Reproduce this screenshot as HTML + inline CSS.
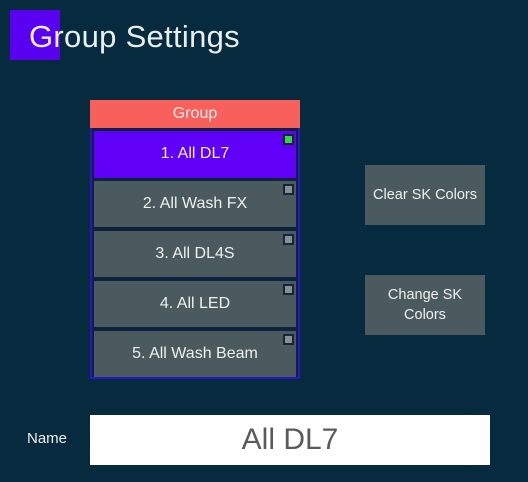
<!DOCTYPE html>
<html><head><style>
body{margin:0;width:528px;height:482px;background:#062a3e;font-family:"Liberation Sans",sans-serif;position:relative;overflow:hidden;color:#fff}
.a{position:absolute}
.item{position:absolute;left:94px;width:202px;height:46px;background:#4a5a5e;color:#f0f0f0;font-size:16px;text-align:center;line-height:46px}
.ind{position:absolute;right:2px;top:3px;width:7px;height:7px;background:#8a8f93;border:2px solid #15263a}
.btn{position:absolute;left:365px;width:120px;background:#4a5a5e;color:#f0f0f0;font-size:14.5px;text-align:center;display:flex;align-items:center;justify-content:center;line-height:20px}
</style></head><body>
<div class="a" style="left:10px;top:10px;width:50px;height:50px;background:#5a00f0"></div>
<div class="a" style="left:29px;top:19px;font-size:31px;color:#e8f0f4;letter-spacing:0.3px">Group Settings</div>
<div class="a" style="left:90px;top:100px;width:210px;height:28px;background:#f8605c;color:#fbecec;font-size:16px;text-align:center;line-height:28px">Group</div>
<div class="a" style="left:90px;top:128px;width:206px;height:249px;border:2px solid #2a16c8;border-top:0;background:#0e2240"></div>
<div class="item" style="top:131px;height:47px;background:#6000f8">1. All DL7<div class="ind" style="background:#3ed24a"></div></div>
<div class="item" style="top:181px">2. All Wash FX<div class="ind"></div></div>
<div class="item" style="top:231px">3. All DL4S<div class="ind"></div></div>
<div class="item" style="top:281px">4. All LED<div class="ind"></div></div>
<div class="item" style="top:331px">5. All Wash Beam<div class="ind"></div></div>
<div class="btn" style="top:165px;height:60px">Clear SK Colors</div>
<div class="btn" style="top:275px;height:60px">Change SK<br>Colors</div>
<div class="a" style="left:27px;top:430px;font-size:15px;color:#f0f0f0">Name</div>
<div class="a" style="left:90px;top:415px;width:400px;height:50px;background:#fff;color:#5a5a5a;font-size:30px;text-align:center;line-height:50px">All DL7</div>
</body></html>
